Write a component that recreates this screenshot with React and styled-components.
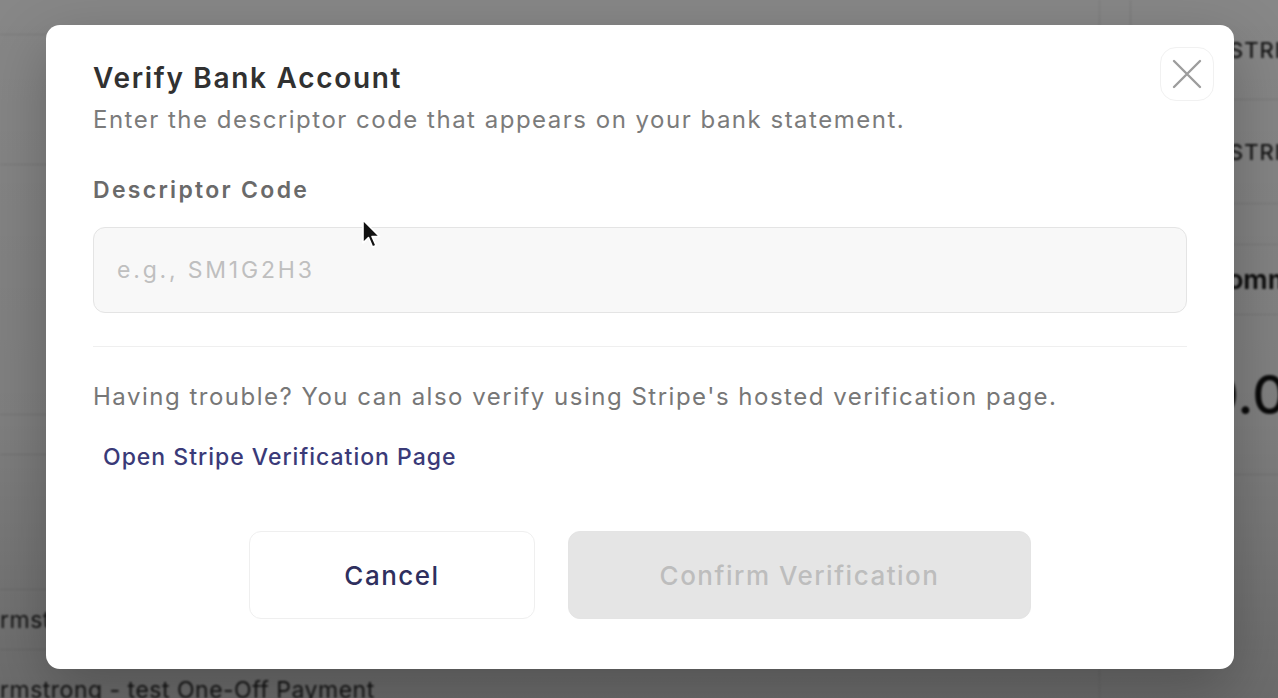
import React from "react";
import styled, { createGlobalStyle } from "styled-components";

const GlobalStyle = createGlobalStyle`
	html, body {
		margin: 0;
		padding: 0;
		background: #ffffff;
	}
	body {
		font-family: Inter, "Noto Sans", "Liberation Sans", sans-serif;
	}
	* {
		box-sizing: border-box;
	}
`;

const App = () => {
	const [code, setCode] = React.useState("");

	return (
		<Page>
			<GlobalStyle />
			<Behind>
				<MainColumn>
					<BgRow h={35} />
					<BgRow h={130} />
					<BgRow h={250} />
					<BgRow h={40} />
					<BgRow h={135} />
					<BgText h={60}>rmstrong - test One-Off Payment</BgText>
					<BgText h={80}>rmstrong - test One-Off Payment</BgText>
				</MainColumn>
				<SideColumn>
					<SideCard>
						<SideRow h={100}>
							<SideCaps>STRIPE</SideCaps>
						</SideRow>
						<SideRow h={104}>
							<SideCaps>STRIPE</SideCaps>
						</SideRow>
						<SideRow h={41} />
						<SideRow h={70}>
							<SideHeading>Commission</SideHeading>
						</SideRow>
						<SideRow h={160}>
							<SideAmount>$0.00</SideAmount>
						</SideRow>
					</SideCard>
				</SideColumn>
			</Behind>

			<Overlay>
				<Modal>
					<CloseButton aria-label='Close'>
						<svg width='30' height='30' viewBox='0 0 30 30' fill='none'>
							<path
								d='M2 2 L28 28 M28 2 L2 28'
								stroke='#9d9d9d'
								strokeWidth='2.4'
								strokeLinecap='round'
							/>
						</svg>
					</CloseButton>

					<Title>Verify Bank Account</Title>
					<Subtitle>
						Enter the descriptor code that appears on your bank statement.
					</Subtitle>

					<Label htmlFor='descriptor'>Descriptor Code</Label>
					<CodeInput
						id='descriptor'
						value={code}
						onChange={(e) => setCode(e.target.value)}
						placeholder='e.g., SM1G2H3'
					/>

					<Divider />

					<HelpText>
						Having trouble? You can also verify using Stripe's hosted
						verification page.
					</HelpText>
					<StripeLink href='#'>Open Stripe Verification Page</StripeLink>

					<Actions>
						<ActionButton variant='outline' w={286}>
							Cancel
						</ActionButton>
						<ActionButton variant='disabled' w={463} disabled={!code}>
							Confirm Verification
						</ActionButton>
					</Actions>
				</Modal>
				<Cursor width='22' height='32' viewBox='0 0 22 32'>
					<path
						d='M2 2 L2 25 L7.5 19.5 L11.5 29 L15 27.5 L11 18.5 L18.5 18.5 Z'
						fill='#111'
						stroke='#fff'
						strokeWidth='1.6'
						strokeLinejoin='round'
					/>
				</Cursor>
			</Overlay>
		</Page>
	);
};

export default App;

const Page = styled.div`
	position: relative;
	width: 1278px;
	height: 698px;
	overflow: hidden;
	background: #ffffff;
`;

const Behind = styled.div`
	display: grid;
	grid-template-columns: 1100px 1fr;
	height: 100%;
	filter: blur(1px);
`;

const MainColumn = styled.div`
	display: flex;
	flex-direction: column;
	border-right: 1px solid #e8e8e8;
`;

const BgRow = styled.div`
	flex-shrink: 0;
	height: ${(p) => p.h}px;
	border-bottom: 1px solid #e4e4e4;
`;

const BgText = styled.div`
	flex-shrink: 0;
	height: ${(p) => p.h}px;
	display: flex;
	align-items: center;
	font-size: 23px;
	letter-spacing: 0.5px;
	color: #2a2a2a;
	white-space: nowrap;
	border-bottom: 1px solid #e4e4e4;
`;

const SideColumn = styled.div`
	padding: 0 0 0 30px;
`;

const SideCard = styled.div`
	border-left: 1px solid #e4e4e4;
	display: flex;
	flex-direction: column;
	white-space: nowrap;
`;

const SideRow = styled.div`
	flex-shrink: 0;
	height: ${(p) => p.h}px;
	display: flex;
	align-items: center;
	padding-left: 60px;
	border-bottom: 1px solid #e4e4e4;
`;

const SideCaps = styled.span`
	font-size: 22px;
	font-weight: 500;
	letter-spacing: 1px;
	color: #2a2a2a;
	margin-left: 38px;
`;

const SideHeading = styled.span`
	font-size: 27px;
	font-weight: 600;
	color: #111111;
	margin-left: 16px;
`;

const SideAmount = styled.span`
	font-size: 54px;
	font-weight: 500;
	color: #111111;
	margin-left: -22px;
`;

const Overlay = styled.div`
	position: absolute;
	inset: 0;
	background: linear-gradient(
		180deg,
		rgba(0, 0, 0, 0.47) 0%,
		rgba(0, 0, 0, 0.5) 60%,
		rgba(0, 0, 0, 0.58) 100%
	);
	display: flex;
	align-items: flex-start;
	padding: 25px 0 0 46px;
`;

const Modal = styled.div`
	position: relative;
	width: 1188px;
	height: 644px;
	background: #ffffff;
	border-radius: 14px;
	box-shadow: 0 20px 60px rgba(0, 0, 0, 0.25);
	padding: 36px 47px 0 47px;
	display: flex;
	flex-direction: column;
`;

const CloseButton = styled.button`
	position: absolute;
	top: 22px;
	right: 20px;
	width: 54px;
	height: 54px;
	display: flex;
	align-items: center;
	justify-content: center;
	background: #ffffff;
	border: 1px solid #f1f1f1;
	border-radius: 16px;
	padding: 0;
	cursor: pointer;
`;

const Title = styled.h2`
	margin: 0;
	font-size: 28px;
	line-height: 34px;
	font-weight: 600;
	letter-spacing: 1.7px;
	color: #313131;
`;

const Subtitle = styled.p`
	margin: 10px 0 0;
	font-size: 24px;
	line-height: 30px;
	letter-spacing: 1.5px;
	color: #7b7b7b;
`;

const Label = styled.label`
	margin-top: 41px;
	font-size: 23px;
	line-height: 28px;
	font-weight: 600;
	letter-spacing: 2.3px;
	color: #6a6a6a;
`;

const CodeInput = styled.input`
	margin-top: 23px;
	height: 86px;
	width: 100%;
	padding: 0 23px;
	font-family: inherit;
	font-size: 23px;
	letter-spacing: 2.8px;
	color: #2e2e2e;
	background: #f8f8f8;
	border: 1px solid #e4e4e4;
	border-radius: 12px;
	outline: none;

	&::placeholder {
		color: #bfbfbf;
	}
`;

const Divider = styled.hr`
	margin: 33px 0 0;
	border: none;
	border-top: 1px solid #efefef;
`;

const HelpText = styled.p`
	margin: 35px 0 0;
	font-size: 24px;
	line-height: 30px;
	letter-spacing: 1.5px;
	color: #777777;
`;

const StripeLink = styled.a`
	align-self: flex-start;
	margin: 30px 0 0 10px;
	font-size: 23px;
	line-height: 30px;
	font-weight: 500;
	letter-spacing: 1px;
	color: #3a3a78;
	text-decoration: none;
`;

const Actions = styled.div`
	margin-top: 59px;
	display: flex;
	justify-content: center;
	align-items: center;
	gap: 33px;
`;

const ActionButton = styled.button`
	width: ${(p) => p.w}px;
	height: 88px;
	border-radius: 12px;
	font-family: inherit;
	font-size: 26px;
	font-weight: 500;
	letter-spacing: 1.5px;
	cursor: pointer;
	border: 1px solid ${(p) => (p.variant === "outline" ? "#efefef" : "#e4e4e4")};
	background: ${(p) => (p.variant === "outline" ? "#ffffff" : "#e5e5e5")};
	color: ${(p) => (p.variant === "outline" ? "#2f2f5e" : "#bdbdbd")};

	&:disabled {
		cursor: not-allowed;
	}
`;

const Cursor = styled.svg`
	position: absolute;
	left: 361px;
	top: 218px;
	pointer-events: none;
`;
